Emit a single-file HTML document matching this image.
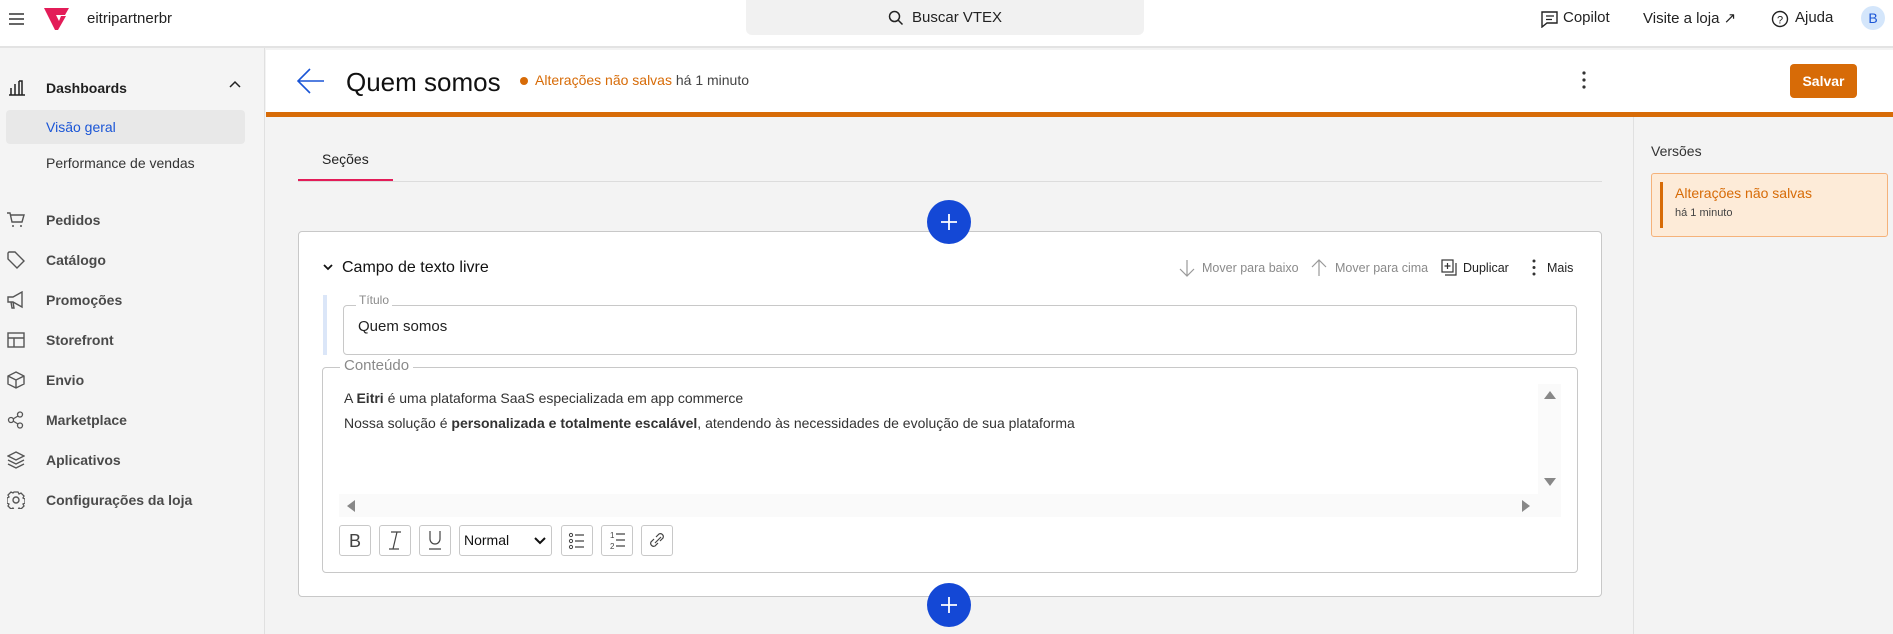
<!DOCTYPE html>
<html><head><meta charset="utf-8"><style>
*{box-sizing:border-box;margin:0;padding:0}
body{width:1893px;height:634px;overflow:hidden;font-family:"Liberation Sans",sans-serif;background:#f3f3f3;position:relative;color:#1f1f1f}
.a{position:absolute}
.top{left:0;top:0;width:1893px;height:48px;background:#fff;border-bottom:2px solid #e3e3e3}
.side{left:0;top:48px;width:265px;height:586px;background:#f4f4f4;border-right:1px solid #e0e0e0}
.nav{position:absolute;left:46px;font-size:14px;font-weight:bold;color:#4a4a4a;line-height:18px}
.ic{position:absolute;left:7px}
.t13{font-size:12.5px;line-height:16px}
svg{display:block}
.tb{position:absolute;top:525px;width:32px;height:31px;border:1px solid #c8c8c8;border-radius:3px;background:#fff}
</style></head><body>
<div class="a top"></div>
<div class="a" style="left:9px;top:12px"><svg width="16" height="14"><path d="M0 2h15M0 7h15M0 12h15" stroke="#333" stroke-width="1.6"/></svg></div>
<div class="a" style="left:44px;top:8px"><svg width="26" height="22"><path d="M0 0h25l-4 7h-9l3 6 2-5h5l-8 14h-3z" fill="#e31c58"/></svg></div>
<div class="a" style="left:87px;top:10px;font-size:15px;color:#222">eitripartnerbr</div>
<div class="a" style="left:746px;top:0;width:398px;height:35px;background:#f1f1f1;border-radius:0 0 6px 6px"></div>
<div class="a" style="left:888px;top:10px"><svg width="16" height="16"><circle cx="6.5" cy="6.5" r="5" fill="none" stroke="#222" stroke-width="1.5"/><path d="M10 10l4.5 4.5" stroke="#222" stroke-width="1.5"/></svg></div>
<div class="a" style="left:912px;top:9px;font-size:15px;color:#222">Buscar VTEX</div>
<div class="a" style="left:1541px;top:11px"><svg width="18" height="17"><path d="M1 1h15v11H6l-5 4z" fill="none" stroke="#222" stroke-width="1.4"/><path d="M5 5h8M5 8.5h6" stroke="#222" stroke-width="1.3"/></svg></div>
<div class="a" style="left:1563px;top:9px;font-size:15px;color:#222">Copilot</div>
<div class="a" style="left:1643px;top:9px;font-size:15px;color:#222">Visite a loja ↗</div>
<div class="a" style="left:1771px;top:10px"><svg width="18" height="18"><circle cx="9" cy="9" r="7.5" fill="none" stroke="#222" stroke-width="1.4"/><text x="9" y="13.5" font-size="11" text-anchor="middle" font-family="Liberation Sans" fill="#222">?</text></svg></div>
<div class="a" style="left:1795px;top:9px;font-size:15px;color:#222">Ajuda</div>
<div class="a" style="left:1861px;top:6px;width:24px;height:24px;border-radius:50%;background:#d4e6fb;color:#1a55d6;font-size:14px;text-align:center;line-height:24px">B</div>

<div class="a side"></div>
<div class="ic" style="left:8px;top:80px"><svg width="18" height="16"><path d="M1 15h16M3 15V8M7 15V4M11 15V1h0M11 1h3v14" fill="none" stroke="#222" stroke-width="1.5"/></svg></div>
<div class="nav" style="top:79px;color:#1f1f1f">Dashboards</div>
<div class="a" style="left:229px;top:80px"><svg width="12" height="8"><path d="M1 7l5-5 5 5" fill="none" stroke="#222" stroke-width="1.5"/></svg></div>
<div class="a" style="left:6px;top:110px;width:239px;height:34px;background:#e8e8e8;border-radius:4px"></div>
<div class="nav" style="top:118px;color:#1a55d6;font-weight:normal">Visão geral</div>
<div class="nav" style="top:154px;font-weight:normal;color:#333">Performance de vendas</div>
<div class="ic" style="top:211px"><svg width="18" height="18"><path d="M0 2h3l2 9h10l2-7H4" fill="none" stroke="#555" stroke-width="1.4"/><circle cx="6" cy="15" r="1" fill="#555"/><circle cx="14" cy="15" r="1" fill="#555"/></svg></div>
<div class="nav" style="top:211px">Pedidos</div>
<div class="ic" style="top:251px"><svg width="18" height="18"><path d="M1 2v6l9 9 7-7-9-9H2z" fill="none" stroke="#555" stroke-width="1.4"/></svg></div>
<div class="nav" style="top:251px">Catálogo</div>
<div class="ic" style="top:291px"><svg width="18" height="18"><path d="M1 6h5l9-5v15l-9-5H1zM4 11l1 6h2l-1-6" fill="none" stroke="#555" stroke-width="1.4"/></svg></div>
<div class="nav" style="top:291px">Promoções</div>
<div class="ic" style="top:331px"><svg width="18" height="18"><rect x="1" y="2" width="16" height="14" fill="none" stroke="#555" stroke-width="1.4"/><path d="M1 7h16M7 7v9" stroke="#555" stroke-width="1.4"/></svg></div>
<div class="nav" style="top:331px">Storefront</div>
<div class="ic" style="top:371px"><svg width="18" height="18"><path d="M9 1l8 4v8l-8 4-8-4V5zM1 5l8 4 8-4M9 9v8" fill="none" stroke="#555" stroke-width="1.4"/></svg></div>
<div class="nav" style="top:371px">Envio</div>
<div class="ic" style="top:411px"><svg width="18" height="18"><circle cx="4" cy="9" r="2.5" fill="none" stroke="#555" stroke-width="1.3"/><circle cx="13" cy="3.5" r="2.5" fill="none" stroke="#555" stroke-width="1.3"/><circle cx="13" cy="14.5" r="2.5" fill="none" stroke="#555" stroke-width="1.3"/><path d="M6 8l5-3M6 10l5 3" stroke="#555" stroke-width="1.3"/></svg></div>
<div class="nav" style="top:411px">Marketplace</div>
<div class="ic" style="top:451px"><svg width="18" height="18"><path d="M9 1l8 4-8 4-8-4zM1 9l8 4 8-4M1 13l8 4 8-4" fill="none" stroke="#555" stroke-width="1.4"/></svg></div>
<div class="nav" style="top:451px">Aplicativos</div>
<div class="ic" style="top:491px"><svg width="18" height="18"><circle cx="9" cy="9" r="3" fill="none" stroke="#555" stroke-width="1.4"/><path d="M7 1h4l1 2 2-1 3 3-1 2 2 1v4l-2 1 1 2-3 3-2-1-1 2H7l-1-2-2 1-3-3 1-2-2-1V7l2-1-1-2 3-3 2 1z" fill="none" stroke="#555" stroke-width="1.3"/></svg></div>
<div class="nav" style="top:491px">Configurações da loja</div>

<div class="a" style="left:266px;top:50px;width:1627px;height:62px;background:#fff"></div>
<div class="a" style="left:266px;top:112px;width:1627px;height:5px;background:#d76b07"></div>
<div class="a" style="left:297px;top:68px"><svg width="28" height="26"><path d="M27 13H2M13 1L1 13l12 12" fill="none" stroke="#1a55d6" stroke-width="1.6"/></svg></div>
<div class="a" style="left:346px;top:67px;font-size:26px;color:#111">Quem somos</div>
<div class="a" style="left:520px;top:77px;width:8px;height:8px;border-radius:50%;background:#d76b07"></div>
<div class="a" style="left:535px;top:72px;font-size:14px;color:#d76b07">Alterações não salvas <span style="color:#444">há 1 minuto</span></div>
<div class="a" style="left:1582px;top:71px"><svg width="4" height="18"><circle cx="2" cy="2" r="1.6" fill="#333"/><circle cx="2" cy="9" r="1.6" fill="#333"/><circle cx="2" cy="16" r="1.6" fill="#333"/></svg></div>
<div class="a" style="left:1790px;top:64px;width:67px;height:34px;background:#d76b07;border-radius:4px;color:#fff;font-weight:bold;font-size:14px;text-align:center;line-height:34px">Salvar</div>

<div class="a" style="left:1633px;top:117px;width:260px;height:517px;background:#f3f3f3;border-left:1px solid #e0e0e0"></div>
<div class="a" style="left:1651px;top:143px;font-size:14px;color:#333">Versões</div>
<div class="a" style="left:1651px;top:173px;width:237px;height:64px;background:#fdebd8;border:1px solid #f5b27a;border-radius:3px"></div>
<div class="a" style="left:1660px;top:182px;width:3px;height:46px;background:#d76b07"></div>
<div class="a" style="left:1675px;top:185px;font-size:14px;color:#d76b07">Alterações não salvas</div>
<div class="a" style="left:1675px;top:207px;font-size:11px;color:#444">há 1 minuto</div>

<div class="a" style="left:322px;top:151px;font-size:14px;color:#222">Seções</div>
<div class="a" style="left:298px;top:181px;width:1304px;height:1px;background:#dcdcdc"></div>
<div class="a" style="left:298px;top:179px;width:95px;height:2px;background:#e31c58"></div>

<div class="a" style="left:298px;top:231px;width:1304px;height:366px;background:#fff;border:1px solid #c8c8c8;border-radius:4px"></div>
<div class="a" style="left:927px;top:200px;width:44px;height:44px;border-radius:50%;background:#1448d6"></div>
<div class="a" style="left:940px;top:213px"><svg width="18" height="18"><path d="M9 1v16M1 9h16" stroke="#fff" stroke-width="1.8"/></svg></div>
<div class="a" style="left:927px;top:583px;width:44px;height:44px;border-radius:50%;background:#1448d6"></div>
<div class="a" style="left:940px;top:596px"><svg width="18" height="18"><path d="M9 1v16M1 9h16" stroke="#fff" stroke-width="1.8"/></svg></div>

<div class="a" style="left:323px;top:264px"><svg width="10" height="7"><path d="M1 1l4 4 4-4" fill="none" stroke="#111" stroke-width="1.8"/></svg></div>
<div class="a" style="left:342px;top:259px;font-size:16px;color:#111">Campo de texto livre</div>
<div class="a" style="left:1179px;top:259px"><svg width="16" height="18"><path d="M8 1v16M1 10l7 7 7-7" fill="none" stroke="#999" stroke-width="1.2"/></svg></div>
<div class="a t13" style="left:1202px;top:260px;color:#8a8a8a">Mover para baixo</div>
<div class="a" style="left:1311px;top:259px"><svg width="16" height="18"><path d="M8 17V1M1 8l7-7 7 7" fill="none" stroke="#999" stroke-width="1.2"/></svg></div>
<div class="a t13" style="left:1335px;top:260px;color:#8a8a8a">Mover para cima</div>
<div class="a" style="left:1441px;top:259px"><svg width="16" height="18"><rect x="1" y="1" width="11" height="12" fill="none" stroke="#333" stroke-width="1.2"/><path d="M4 16h11V4M6.5 4v6M3.5 7h6" fill="none" stroke="#333" stroke-width="1.2"/></svg></div>
<div class="a t13" style="left:1463px;top:260px;color:#222">Duplicar</div>
<div class="a" style="left:1532px;top:259px"><svg width="4" height="17"><circle cx="2" cy="2" r="1.5" fill="#333"/><circle cx="2" cy="8.5" r="1.5" fill="#333"/><circle cx="2" cy="15" r="1.5" fill="#333"/></svg></div>
<div class="a t13" style="left:1547px;top:260px;color:#222">Mais</div>

<div class="a" style="left:323px;top:295px;width:4px;height:60px;background:#dbe6f8"></div>
<div class="a" style="left:343px;top:305px;width:1234px;height:50px;border:1px solid #c8c8c8;border-radius:4px"></div>
<div class="a" style="left:356px;top:293px;padding:0 3px;background:#fff;font-size:12px;color:#8a8a8a">Título</div>
<div class="a" style="left:358px;top:318px;font-size:15px;color:#222">Quem somos</div>

<div class="a" style="left:322px;top:367px;width:1256px;height:206px;border:1px solid #c8c8c8;border-radius:4px"></div>
<div class="a" style="left:340px;top:357px;padding:0 4px;background:#fff;font-size:15px;color:#8a8a8a">Conteúdo</div>
<div class="a" style="left:344px;top:390px;font-size:14px;color:#333">A <b>Eitri</b> é uma plataforma SaaS especializada em app commerce</div>
<div class="a" style="left:344px;top:415px;font-size:14px;color:#333">Nossa solução é <b>personalizada e totalmente escalável</b>, atendendo às necessidades de evolução de sua plataforma</div>
<div class="a" style="left:1538px;top:384px;width:23px;height:110px;background:#fafafa"></div>
<div class="a" style="left:339px;top:494px;width:1222px;height:23px;background:#fafafa"></div>
<div class="a" style="left:1543px;top:390px"><svg width="14" height="10"><path d="M7 1l6 8H1z" fill="#888"/></svg></div>
<div class="a" style="left:1543px;top:477px"><svg width="14" height="10"><path d="M7 9l6-8H1z" fill="#888"/></svg></div>
<div class="a" style="left:346px;top:499px"><svg width="10" height="14"><path d="M1 7l8-6v12z" fill="#888"/></svg></div>
<div class="a" style="left:1521px;top:499px"><svg width="10" height="14"><path d="M9 7l-8-6v12z" fill="#888"/></svg></div>

<div class="tb" style="left:339px"><svg width="30" height="29"><text x="15" y="21" font-size="18" text-anchor="middle" font-family="Liberation Sans" fill="#444">B</text></svg></div>
<div class="tb" style="left:379px"><svg width="30" height="29"><path d="M11 6h10M9 23h10M17 6l-4 17" fill="none" stroke="#444" stroke-width="1.2"/></svg></div>
<div class="tb" style="left:419px"><svg width="30" height="29"><path d="M10 5v8a5 5 0 0 0 10 0V5M9 23h12" fill="none" stroke="#444" stroke-width="1.2"/></svg></div>
<div class="tb" style="left:459px;width:93px;font-size:14px;line-height:29px;padding-left:4px;color:#111">Normal<svg class="a" style="left:74px;top:11px" width="12" height="8"><path d="M1 1l5 5 5-5" fill="none" stroke="#111" stroke-width="2"/></svg></div>
<div class="tb" style="left:561px"><svg width="30" height="29"><circle cx="9" cy="9" r="1.6" fill="none" stroke="#444"/><circle cx="9" cy="15" r="1.6" fill="none" stroke="#444"/><circle cx="9" cy="21" r="1.6" fill="none" stroke="#444"/><path d="M13 9h9M13 15h9M13 21h9" stroke="#444" stroke-width="1.2"/></svg></div>
<div class="tb" style="left:601px"><svg width="30" height="29"><text x="8" y="12" font-size="8" font-family="Liberation Sans" fill="#444">1</text><text x="8" y="23" font-size="8" font-family="Liberation Sans" fill="#444">2</text><path d="M14 8h9M14 14h9M14 20h9" stroke="#444" stroke-width="1.2"/></svg></div>
<div class="tb" style="left:641px"><svg width="30" height="29"><path d="M13 17l6-6M12 13l-3 3a3 3 0 0 0 4 4l3-3M18 15l3-3a3 3 0 0 0-4-4l-3 3" fill="none" stroke="#444" stroke-width="1.2"/></svg></div>
</body></html>
